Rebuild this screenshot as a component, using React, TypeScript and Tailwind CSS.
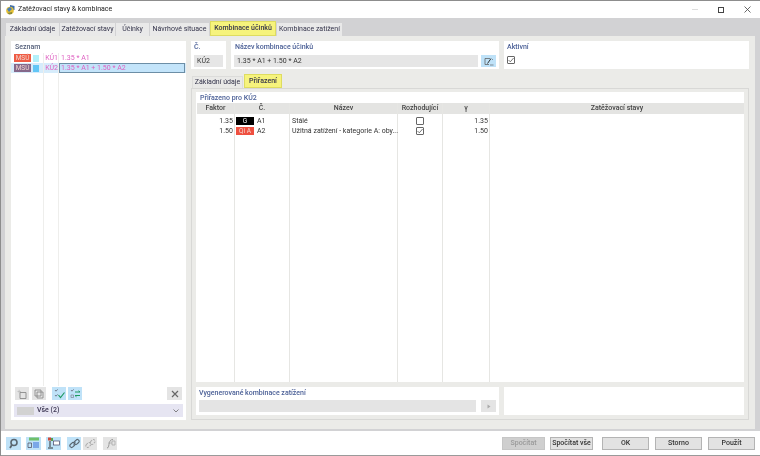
import React from "react";

const FONT = "font-['Roboto','Noto_Sans',sans-serif]";
const LABEL = "text-[7px] leading-[10px] text-[#4a5f96] font-medium";

const TABS = [
  { label: "Základní údaje", w: "w-[53px]" },
  { label: "Zatěžovací stavy", w: "w-[55px]" },
  { label: "Účinky", w: "w-[33px]" },
  { label: "Návrhové situace", w: "w-[59px]" },
  { label: "Kombinace účinků", w: "w-[66px]", active: true },
  { label: "Kombinace zatížení", w: "w-[65px]" },
];

function Tab({ label, w, active }: { label: string; w: string; active?: boolean }) {
  if (active) {
    return (
      <div className={`${w} h-[15px] -mt-[2px] flex items-center justify-center bg-[#f6f37c] border border-[#dedc60] text-[7px] text-[#33334a] font-medium`}>
        {label}
      </div>
    );
  }
  return (
    <div className={`${w} h-[13px] flex items-center justify-center bg-[#e9e9e9] text-[7px] text-[#33334a]`}>
      {label}
    </div>
  );
}

function CheckBox({ checked }: { checked?: boolean }) {
  return (
    <div className="w-[8px] h-[8px] border border-[#666] rounded-[1px] bg-white flex items-center justify-center">
      {checked && (
        <svg width="6" height="6" viewBox="0 0 6 6" fill="none">
          <path d="M0.5 3 L2.3 4.8 L5.6 1" stroke="#555" strokeWidth="0.8" />
        </svg>
      )}
    </div>
  );
}

function IconBtn({ children, off, w = "w-[14px]" }: { children: React.ReactNode; off?: boolean; w?: string }) {
  return (
    <div className={`${w} h-[13px] flex items-center justify-center ${off ? "bg-[#e4e4e4]" : "bg-[#bfe2f8]"}`}>
      {children}
    </div>
  );
}

function ListRow({ tag, tagCls, swatch, id, text, selected }: { tag: string; tagCls: string; swatch: string; id: string; text: string; selected?: boolean }) {
  return (
    <div className={`h-[10px] flex items-center ${selected ? "bg-[#d6ecfb]" : ""}`}>
      <div className={`w-[17px] h-[8px] ml-[3px] shrink-0 flex items-center justify-center text-[6.5px] leading-none text-[#f3d6d0] ${tagCls}`}>{tag}</div>
      <div className={`w-[6px] h-[7px] ml-[2px] shrink-0 ${swatch}`} />
      <div className="w-[6px] shrink-0" />
      <div className="w-[13px] shrink-0 text-right text-[7px] leading-none text-[#de5fc0]">{id}</div>
      <div className={`ml-[1px] h-[10px] flex items-center pl-[1px] text-[7px] leading-none text-[#de5fc0] ${selected ? "flex-1 mr-[1px] bg-[#c3e4fa] border border-[#6c8ea6]" : "pl-[2px]"}`}>{text}</div>
    </div>
  );
}

function Column({ title, w, last, children }: { title: string; w: string; last?: boolean; children?: React.ReactNode }) {
  return (
    <div className={`${w} flex flex-col ${last ? "" : "border-r border-[#e6e6e3]"}`}>
      <div className="h-[11px] bg-[#e4e4e2] flex items-center justify-center text-[7px] font-medium text-[#444]">{title}</div>
      <div className="flex-1 pt-[2px]">{children}</div>
    </div>
  );
}

function Cell({ children, cls = "" }: { children?: React.ReactNode; cls?: string }) {
  return <div className={`h-[10px] flex items-center text-[7px] text-[#333] leading-none ${cls}`}>{children}</div>;
}

function FootBtn({ label, w, off }: { label: string; w: string; off?: boolean }) {
  return (
    <div className={`${w} h-[13px] flex items-center justify-center border text-[7px] font-medium ${off ? "bg-[#cfcfcf] border-[#c6c6c6] text-[#999]" : "bg-[#e2e2e2] border-[#b4b4b4] text-[#333]"}`}>
      {label}
    </div>
  );
}

export default function App() {
  return (
    <div className={`${FONT} w-[760px] h-[456px] bg-[#d2d2d4] flex flex-col border-t border-l border-[#8d8d8d] overflow-hidden blur-[0.3px]`}>
      {/* Title bar */}
      <div className="h-[17px] bg-white flex items-center shrink-0">
        <svg className="ml-[4px]" width="11" height="11" viewBox="0 0 11 11">
          <path d="M5 1 L9.5 2 L9.5 6 L5 6 Z" fill="#3f6ea8" />
          <circle cx="5" cy="6.5" r="3.8" fill="#e3bf35" />
          <path d="M2 5 L5 3 L7 5 L4 8 Z" fill="#4a7fb8" />
          <path d="M2.5 9 L7 8 L7 10 L4 10.5 Z" fill="#8a8a3a" />
        </svg>
        <span className="ml-[2px] text-[7px] text-[#222]">Zatěžovací stavy &amp; kombinace</span>
        <div className="flex-1" />
        <div className="w-[6px] h-px bg-[#ddd] mr-[20px]" />
        <div className="w-[6px] h-[6px] border border-[#444] mr-[20px]" />
        <svg className="mr-[9px]" width="7" height="7" viewBox="0 0 7 7">
          <path d="M0.5 0.5 L6.5 6.5 M6.5 0.5 L0.5 6.5" stroke="#444" strokeWidth="0.8" />
        </svg>
      </div>

      {/* Main tabs */}
      <div className="h-[18px] flex items-end pl-[5px] shrink-0 gap-[1px]">
        {TABS.map((t) => (
          <Tab key={t.label} label={t.label} w={t.w} active={t.active} />
        ))}
      </div>

      {/* Content */}
      <div className="h-[393px] ml-[4px] mr-[5px] bg-[#ebebe8] shrink-0 flex gap-[5px] px-[6px] pt-[5px] pb-[9px]">
        {/* List panel */}
        <div className="w-[175px] shrink-0 bg-white flex flex-col relative">
          <div className={`${LABEL} !text-[#55607a] pl-[4px] pt-[1px] h-[12px]`}>Seznam</div>
          <ListRow tag="MSÚ" tagCls="bg-[#ef5b43]" swatch="bg-[#b3f0fa]" id="KÚ1" text="1.35 * A1" />
          <ListRow tag="MSÚ" tagCls="bg-[#85688a]" swatch="bg-[#62c6f6]" id="KÚ2" text="1.35 * A1 + 1.50 * A2" selected />
          <div className="absolute left-[32px] top-[12px] bottom-[34px] w-px bg-[#eeeeec]" />
          <div className="absolute left-[47px] top-[12px] bottom-[34px] w-px bg-[#eeeeec]" />
          <div className="flex-1" />
          <div className="flex items-center px-[4px] h-[13px]">
            <IconBtn off>
              <svg width="10" height="10" viewBox="0 0 10 10" fill="none">
                <path d="M3 3.5 H9 V9.5 H3 Z" stroke="#8a8a8a" strokeWidth="0.9" />
                <path d="M0.5 2.5 H4 M2.2 0.8 V4.2" stroke="#bbb" strokeWidth="0.8" />
              </svg>
            </IconBtn>
            <div className="w-[3px]" />
            <IconBtn off>
              <svg width="10" height="10" viewBox="0 0 10 10" fill="none">
                <path d="M1 1 H7 V7 H1 Z M3 3 H9 V9 H3 Z" stroke="#808080" strokeWidth="0.8" />
              </svg>
            </IconBtn>
            <div className="w-[6px]" />
            <IconBtn>
              <svg width="11" height="10" viewBox="0 0 11 10" fill="none">
                <path d="M1 1 L2 2.2 L3.6 0.4 M1 6 L2 7.2 L3.6 5.4" stroke="#556" strokeWidth="0.7" />
                <path d="M4.5 6 L6.5 8.5 L10.5 3.5" stroke="#1f9a62" strokeWidth="1.2" />
              </svg>
            </IconBtn>
            <div className="w-[2px]" />
            <IconBtn>
              <svg width="11" height="10" viewBox="0 0 11 10" fill="none">
                <path d="M1 1 L2 2.2 L3.6 0.4" stroke="#556" strokeWidth="0.7" />
                <path d="M1 6 H3.5 V8.5 H1 Z" stroke="#778" strokeWidth="0.6" />
                <path d="M5 3 H10 M10 3 L8.5 1.8 M10 6.5 H5 M5 6.5 L6.5 7.8" stroke="#1f9a62" strokeWidth="1" />
              </svg>
            </IconBtn>
            <div className="flex-1" />
            <IconBtn off w="w-[15px]">
              <svg width="8" height="8" viewBox="0 0 8 8">
                <path d="M1 1 L7 7 M7 1 L1 7" stroke="#666" strokeWidth="1.2" />
              </svg>
            </IconBtn>
          </div>
          <div className="mt-[4px] mx-[3px] h-[13px] bg-[#e6e5f2] flex items-center pl-[3px]">
            <div className="w-[17px] h-[8px] bg-[#d2d2d2]" />
            <span className="ml-[3px] text-[7px] font-medium text-[#3a3450]">Vše (2)</span>
            <div className="flex-1" />
            <svg className="mr-[4px]" width="6" height="4" viewBox="0 0 6 4" fill="none">
              <path d="M0.5 0.5 L3 3 L5.5 0.5" stroke="#555" strokeWidth="0.7" />
            </svg>
          </div>
          <div className="h-[3px]" />
        </div>

        {/* Right side */}
        <div className="flex-1 flex flex-col min-w-0">
          <div className="flex h-[28px] gap-[5px] shrink-0">
            <div className="w-[35px] bg-white px-[3px]">
              <div className={`${LABEL} pt-[1px]`}>Č.</div>
              <div className="mt-[3px] h-[12px] bg-[#e6e6e6] flex items-center pl-[3px] text-[7px] text-[#333]">KÚ2</div>
            </div>
            <div className="w-[268px] bg-white px-[3px]">
              <div className={`${LABEL} pt-[1px] pl-px`}>Název kombinace účinků</div>
              <div className="mt-[3px] flex gap-[3px]">
                <div className="flex-1 h-[12px] bg-[#e6e6e6] flex items-center pl-[3px] text-[7px] text-[#333]">1.35 * A1 + 1.50 * A2</div>
                <div className="w-[15px] h-[12px] bg-[#bfe2f8] flex items-center justify-center">
                  <svg width="10" height="9" viewBox="0 0 10 9" fill="none">
                    <path d="M6 1.5 H1 V7.5 H5" stroke="#555" strokeWidth="0.7" />
                    <path d="M3.5 6.5 L7 1.5" stroke="#333" strokeWidth="1" />
                    <path d="M6 8 H9.5 M8.5 2 V3" stroke="#555" strokeWidth="0.6" />
                  </svg>
                </div>
              </div>
            </div>
            <div className="flex-1 bg-white px-[3px]">
              <div className={`${LABEL} pt-[1px]`}>Aktivní</div>
              <div className="mt-[4px]">
                <CheckBox checked />
              </div>
            </div>
          </div>

          {/* Inner tabs */}
          <div className="h-[19px] flex items-end shrink-0 gap-[1px] pl-[1px]">
            <div className="w-[51px] h-[12px] bg-[#e9e9e7] border-x border-t border-[#dcdcda] flex items-center justify-center text-[7px] text-[#33334a]">Základní údaje</div>
            <div className="w-[38px] h-[14px] bg-[#f6f37c] border border-[#dedc60] flex items-center justify-center text-[7px] font-medium text-[#33334a]">Přiřazení</div>
          </div>

          <div className="flex-1 border border-[#d8d8d6] flex flex-col px-[4px] pt-[3px] pb-[4px] gap-[5px] min-h-0">
            {/* Assigned table */}
            <div className="flex-1 bg-white flex flex-col min-h-0 pl-[1px]">
              <div className={`${LABEL} h-[11px] pl-[3px] pt-px`}>Přiřazeno pro KÚ2</div>
              <div className="flex-1 flex min-h-0">
                <Column title="Faktor" w="w-[38px]">
                  <Cell cls="justify-end pr-[1px]">1.35</Cell>
                  <Cell cls="justify-end pr-[1px]">1.50</Cell>
                </Column>
                <Column title="Č." w="w-[55px]">
                  <Cell cls="pl-px">
                    <span className="w-[18px] h-[8px] bg-black text-white text-[6.5px] flex items-center justify-center">G</span>
                    <span className="ml-[3px]">A1</span>
                  </Cell>
                  <Cell cls="pl-px">
                    <span className="w-[18px] h-[8px] bg-[#ef5040] text-[#f6d8d0] text-[6.5px] flex items-center justify-center">Qi A</span>
                    <span className="ml-[3px]">A2</span>
                  </Cell>
                </Column>
                <Column title="Název" w="w-[108px]">
                  <Cell cls="pl-[2px]">Stálé</Cell>
                  <Cell cls="pl-[2px] whitespace-nowrap">Užitná zatížení - kategorie A: oby...</Cell>
                </Column>
                <Column title="Rozhodující" w="w-[45px]">
                  <Cell cls="justify-center"><CheckBox /></Cell>
                  <Cell cls="justify-center"><CheckBox checked /></Cell>
                </Column>
                <Column title="γ" w="w-[47px]">
                  <Cell cls="justify-end pr-[1px]">1.35</Cell>
                  <Cell cls="justify-end pr-[1px]">1.50</Cell>
                </Column>
                <Column title="Zatěžovací stavy" w="flex-1" last />
              </div>
            </div>

            {/* Generated combinations */}
            <div className="h-[28px] flex gap-[5px] shrink-0">
              <div className="w-[303px] bg-white px-[3px]">
                <div className={`${LABEL} pt-[1px]`}>Vygenerované kombinace zatížení</div>
                <div className="mt-[2px] flex gap-[5px]">
                  <div className="flex-1 h-[12px] bg-[#e4e4e4]" />
                  <div className="w-[15px] h-[12px] bg-[#e4e4e4] flex items-center justify-center">
                    <svg width="4" height="5" viewBox="0 0 4 5">
                      <path d="M0.5 0.5 L3.5 2.5 L0.5 4.5 Z" fill="#aaa" />
                    </svg>
                  </div>
                </div>
              </div>
              <div className="flex-1 bg-white" />
            </div>
          </div>
        </div>
      </div>

      {/* Footer */}
      <div className="flex-1 mt-[2px] bg-white flex items-center pl-[5px] border-b border-[#9a9a9a]">
        <IconBtn w="w-[15px]">
          <svg width="11" height="11" viewBox="0 0 11 11" fill="none">
            <circle cx="6" cy="4.5" r="3" stroke="#5a6670" strokeWidth="1.6" />
            <path d="M3.8 7 L2 10" stroke="#5a6670" strokeWidth="1.8" />
          </svg>
        </IconBtn>
        <div className="w-[5px]" />
        <IconBtn w="w-[15px]">
          <svg width="13" height="12" viewBox="0 0 13 12">
            <rect x="2" y="0.5" width="10" height="3" fill="#6fbf6a" />
            <rect x="6" y="5" width="6" height="6" fill="#7aa7e8" />
            <path d="M1 6 H4.5 V10.5 H1 Z" fill="none" stroke="#556" strokeWidth="0.8" />
          </svg>
        </IconBtn>
        <div className="w-[5px]" />
        <IconBtn w="w-[15px]">
          <svg width="13" height="12" viewBox="0 0 13 12">
            <rect x="1" y="0.5" width="3" height="3" fill="#d04a3a" />
            <rect x="4" y="1" width="2" height="3" fill="#5aa050" />
            <path d="M3 4 V10 M1 11 H6" stroke="#333" strokeWidth="1" />
            <rect x="6.5" y="4" width="6" height="4" fill="#fff" stroke="#446" strokeWidth="0.7" />
          </svg>
        </IconBtn>
        <div className="w-[6px]" />
        <IconBtn w="w-[14px]">
          <svg width="11" height="11" viewBox="0 0 11 11" fill="none">
            <path d="M4.5 6.5 L6.5 4.5" stroke="#5a6670" strokeWidth="1" />
            <rect x="0.5" y="5.5" width="5.5" height="3.5" rx="1.7" transform="rotate(-45 3 7)" stroke="#5a6670" strokeWidth="1.1" />
            <rect x="5" y="2" width="5.5" height="3.5" rx="1.7" transform="rotate(-45 8 4)" stroke="#5a6670" strokeWidth="1.1" />
          </svg>
        </IconBtn>
        <div className="w-[2px]" />
        <IconBtn off w="w-[14px]">
          <svg width="11" height="11" viewBox="0 0 11 11" fill="none">
            <rect x="0.5" y="5.5" width="5.5" height="3.5" rx="1.7" transform="rotate(-45 3 7)" stroke="#aaa" strokeWidth="1" strokeDasharray="2 1" />
            <rect x="5" y="2" width="5.5" height="3.5" rx="1.7" transform="rotate(-45 8 4)" stroke="#aaa" strokeWidth="1" strokeDasharray="2 1" />
          </svg>
        </IconBtn>
        <div className="w-[6px]" />
        <IconBtn off w="w-[14px]">
          <svg width="11" height="11" viewBox="0 0 11 11" fill="none">
            <path d="M2 10 C4 10 3.5 7 4.5 4.5 C5 2.5 6 1.5 8 1.5" stroke="#999" strokeWidth="1" />
            <path d="M3 5 H7 M7 3 H10 V7 H7 Z" stroke="#aaa" strokeWidth="0.8" />
          </svg>
        </IconBtn>
        <div className="flex-1" />
        <FootBtn label="Spočítat" w="w-[43px]" off />
        <div className="w-[5px]" />
        <FootBtn label="Spočítat vše" w="w-[43px]" />
        <div className="w-[9px]" />
        <FootBtn label="OK" w="w-[47px]" />
        <div className="w-[6px]" />
        <FootBtn label="Storno" w="w-[47px]" />
        <div className="w-[6px]" />
        <FootBtn label="Použít" w="w-[47px]" />
        <div className="w-[5px]" />
      </div>
    </div>
  );
}
